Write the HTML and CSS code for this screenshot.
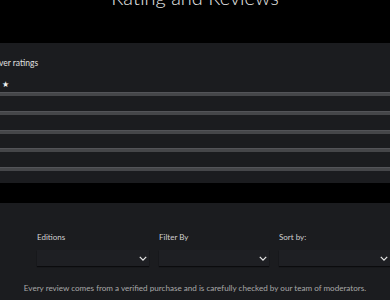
FILE: index.html
```html
<!DOCTYPE html>
<html lang="en">
<head>
<meta charset="UTF-8">
<meta name="viewport" content="width=device-width, initial-scale=1.0">
<title>Rating and Reviews</title>
<link rel="stylesheet" href="styles.css">
</head>
<body>
<div class="page">
    <div class="header">
        <h1 class="title">Rating and Reviews</h1>
    </div>

    <div class="ratings">
        <div class="ratings-label">ver ratings</div>
        <div class="star-row">&#9733;</div>
        <div class="bar"></div>
        <div class="bar"></div>
        <div class="bar"></div>
        <div class="bar"></div>
        <div class="bar"></div>
    </div>

    <div class="filters">
        <div class="filter-row">
            <div class="filter">
                <div class="filter-label">Editions</div>
                <div class="select"><svg class="chevron" viewBox="0 0 10 6"><path d="M1 1l4 4 4-4" /></svg></div>
            </div>
            <div class="filter">
                <div class="filter-label">Filter By</div>
                <div class="select"><svg class="chevron" viewBox="0 0 10 6"><path d="M1 1l4 4 4-4" /></svg></div>
            </div>
            <div class="filter">
                <div class="filter-label">Sort by:</div>
                <div class="select"><svg class="chevron" viewBox="0 0 10 6"><path d="M1 1l4 4 4-4" /></svg></div>
            </div>
        </div>
        <p class="note">Every review comes from a verified purchase and is carefully checked by our team of moderators.</p>
    </div>
</div>
</body>
</html>
```

FILE: styles.css
```css
body {
    margin: 0;
    padding: 0;
    background-color: #000;
    font-family: Lato, 'Open Sans', sans-serif;
    color: #fff;
    overflow: hidden;
}

.page {
    width: 390px;
    height: 300px;
    overflow: hidden;
}

.header {
    height: 43px;
    overflow: hidden;
}

.title {
    margin: -17px 0 0 0;
    font-size: 20px;
    font-weight: 300;
    line-height: 28px;
    text-align: center;
    color: #e6e6e6;
}

.ratings {
    height: 140px;
    background-color: #1b1c1f;
    padding-top: 15px;
    box-sizing: border-box;
}

.ratings-label {
    font-size: 8.5px;
    line-height: 10px;
    color: #e0e0e0;
    margin-left: -1px;
}

.star-row {
    font-size: 8px;
    line-height: 10px;
    color: #f2f2f2;
    margin: 11px 0 3px 2px;
}

.bar {
    height: 3px;
    background-color: #454649;
    border-top: 1px solid #535458;
    margin-bottom: 14.75px;
}

.filters {
    margin-top: 20px;
    height: 97px;
    background-color: #1b1c1f;
    padding-top: 29px;
    box-sizing: border-box;
}

.filter-row {
    display: grid;
    grid-template-columns: 112px 110px 1fr;
    column-gap: 10px;
    padding-left: 37px;
}

.filter-label {
    font-size: 8px;
    line-height: 10px;
    color: #d0d0d0;
    font-weight: 400;
    margin-bottom: 8px;
}

.select {
    height: 16px;
    background-color: #1e1f23;
    box-shadow: 0 1px 1px #0b0b0d;
    display: flex;
    justify-content: flex-end;
    align-items: center;
    padding-right: 2px;
}

.chevron {
    width: 8px;
    height: 5px;
    fill: none;
    stroke: #e6e6e6;
    stroke-width: 1.6;
}

.note {
    margin: 17px 0 0 0;
    font-size: 8.1px;
    line-height: 10px;
    color: #a8a8a8;
    text-align: center;
}
```
